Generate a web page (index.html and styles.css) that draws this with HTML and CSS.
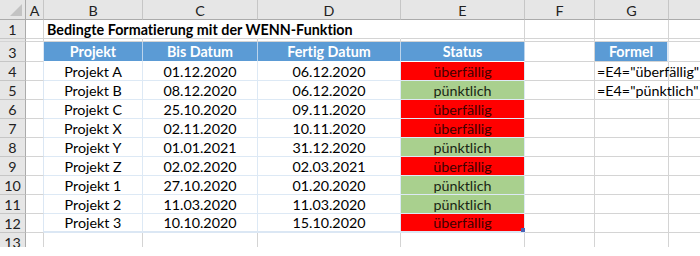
FILE: index.html
```html
<!DOCTYPE html>
<html lang="de">
<head>
<meta charset="utf-8">
<title>Bedingte Formatierung mit der WENN-Funktion</title>
<link rel="stylesheet" href="styles.css">
</head>
<body>
<div class="sheet">
  <div class="grid">
    <!-- column headers -->
    <div class="corner"><svg width="25" height="19" viewBox="0 0 25 19"><polygon points="10,16 22,16 22,4" fill="#c3c3c3"/></svg></div>
    <div class="ch">A</div><div class="ch">B</div><div class="ch">C</div><div class="ch">D</div><div class="ch">E</div><div class="ch">F</div><div class="ch">G</div><div class="ch last"></div>

    <!-- row 1 -->
    <div class="rh">1</div>
    <div class="c"></div>
    <div class="c title">Bedingte Formatierung mit der WENN-Funktion</div>
    <div class="c nob"></div><div class="c nob"></div><div class="c"></div><div class="c"></div><div class="c"></div><div class="c"></div>

    <!-- row 2 -->
    <div class="rh thin"></div>
    <div class="c thin"></div><div class="c thin"></div><div class="c thin"></div><div class="c thin"></div><div class="c thin"></div><div class="c thin"></div><div class="c thin"></div><div class="c thin"></div>

    <!-- row 3 -->
    <div class="rh">3</div>
    <div class="c tl"></div>
    <div class="th">Projekt</div><div class="th">Bis Datum</div><div class="th">Fertig Datum</div><div class="th">Status</div>
    <div class="c"></div>
    <div class="th fh">Formel</div>
    <div class="c"></div>

    <!-- row 4 -->
    <div class="rh">4</div><div class="c tl"></div>
    <div class="td">Projekt A</div><div class="td">01.12.2020</div><div class="td">06.12.2020</div><div class="td red">überfällig</div>
    <div class="c"></div><div class="c formula">=E4="überfällig"</div><div class="c"></div>

    <!-- row 5 -->
    <div class="rh">5</div><div class="c tl"></div>
    <div class="td">Projekt B</div><div class="td">08.12.2020</div><div class="td">06.12.2020</div><div class="td green">pünktlich</div>
    <div class="c"></div><div class="c formula">=E4="pünktlich"</div><div class="c"></div>

    <!-- row 6 -->
    <div class="rh">6</div><div class="c tl"></div>
    <div class="td">Projekt C</div><div class="td">25.10.2020</div><div class="td">09.11.2020</div><div class="td red">überfällig</div>
    <div class="c"></div><div class="c"></div><div class="c"></div>

    <!-- row 7 -->
    <div class="rh">7</div><div class="c tl"></div>
    <div class="td">Projekt X</div><div class="td">02.11.2020</div><div class="td">10.11.2020</div><div class="td red">überfällig</div>
    <div class="c"></div><div class="c"></div><div class="c"></div>

    <!-- row 8 -->
    <div class="rh">8</div><div class="c tl"></div>
    <div class="td">Projekt Y</div><div class="td">01.01.2021</div><div class="td">31.12.2020</div><div class="td green">pünktlich</div>
    <div class="c"></div><div class="c"></div><div class="c"></div>

    <!-- row 9 -->
    <div class="rh">9</div><div class="c tl"></div>
    <div class="td">Projekt Z</div><div class="td">02.02.2020</div><div class="td">02.03.2021</div><div class="td red">überfällig</div>
    <div class="c"></div><div class="c"></div><div class="c"></div>

    <!-- row 10 -->
    <div class="rh">10</div><div class="c tl"></div>
    <div class="td">Projekt 1</div><div class="td">27.10.2020</div><div class="td">01.20.2020</div><div class="td green">pünktlich</div>
    <div class="c"></div><div class="c"></div><div class="c"></div>

    <!-- row 11 -->
    <div class="rh">11</div><div class="c tl"></div>
    <div class="td">Projekt 2</div><div class="td">11.03.2020</div><div class="td">11.03.2020</div><div class="td green">pünktlich</div>
    <div class="c"></div><div class="c"></div><div class="c"></div>

    <!-- row 12 -->
    <div class="rh">12</div><div class="c tl"></div>
    <div class="td lastrow">Projekt 3</div><div class="td lastrow">10.10.2020</div><div class="td lastrow">15.10.2020</div><div class="td red lastrow handle-cell">überfällig<span class="handle"></span></div>
    <div class="c"></div><div class="c"></div><div class="c"></div>

    <!-- row 13 -->
    <div class="rh">13</div><div class="c"></div>
    <div class="c"></div><div class="c"></div><div class="c"></div><div class="c"></div>
    <div class="c"></div><div class="c"></div><div class="c"></div>
  </div>
</div>
</body>
</html>
```

FILE: styles.css
```css
html, body {
  margin: 0;
  padding: 0;
  background: #ffffff;
}

.sheet {
  width: 700px;
  height: 247px;
  overflow: hidden;
  font-family: Lato, "Open Sans", sans-serif;
  font-size: 14.3px;
  font-variant-ligatures: none;
  color: #000;
}

.grid {
  display: grid;
  grid-template-columns: 26px 18px 99px 115px 143px 124px 70px 74px 40px;
  grid-template-rows: 20px 19px 3px 20px repeat(10, 19px);
}

.grid > div {
  box-sizing: border-box;
  display: flex;
  align-items: center;
  white-space: nowrap;
  min-width: 0;
}

.corner {
  background: #e6e6e6;
  border-right: 1px solid #ababab;
  border-bottom: 1px solid #ababab;
}

.corner svg {
  display: block;
}

.ch {
  background: #e6e6e6;
  border-right: 1px solid #c6c6c6;
  border-bottom: 1px solid #ababab;
  justify-content: center;
  color: #222;
  padding-top: 1px;
}

.rh {
  background: #e6e6e6;
  border-right: 1px solid #ababab;
  border-bottom: 1px solid #c6c6c6;
  justify-content: center;
  color: #222;
  padding-top: 1px;
}

.c {
  border-right: 1px solid #d4d4d4;
  border-bottom: 1px solid #d4d4d4;
}

.c.nob {
  border-right-color: transparent;
}

.c.title {
  font-weight: 700;
  padding-left: 3px;
  overflow: visible;
  border-right-color: transparent;
  position: relative;
  z-index: 1;
}

.thin {
  border-bottom-color: #d4d4d4;
}

.c.tl {
  border-right-color: #dbe7f4;
}

.th {
  background: #5b9bd5;
  color: #fff;
  font-weight: 700;
  justify-content: center;
  border-right: 1px solid #bcd4ec;
  border-bottom: 1px solid #ffffff;
}

.th.fh {
  border-right: 2px solid #dbe7f4;
  border-bottom: 1px solid #d4d4d4;
}

.td {
  justify-content: center;
  border-right: 1px solid #dde9f5;
  border-bottom: 1px solid #dde9f5;
}

.td.lastrow {
  border-bottom: 2px solid #dbe7f4;
}

.td.red {
  background: #ff0000;
  color: #420000;
}

.td.green {
  background: #a9d08e;
  color: #1a2614;
}

.c.formula {
  padding-left: 2px;
  overflow: visible;
  position: relative;
  z-index: 1;
}

.handle-cell {
  position: relative;
}

.handle {
  position: absolute;
  right: -1px;
  bottom: -1px;
  width: 4px;
  height: 4px;
  background: #4a63b5;
}
```
